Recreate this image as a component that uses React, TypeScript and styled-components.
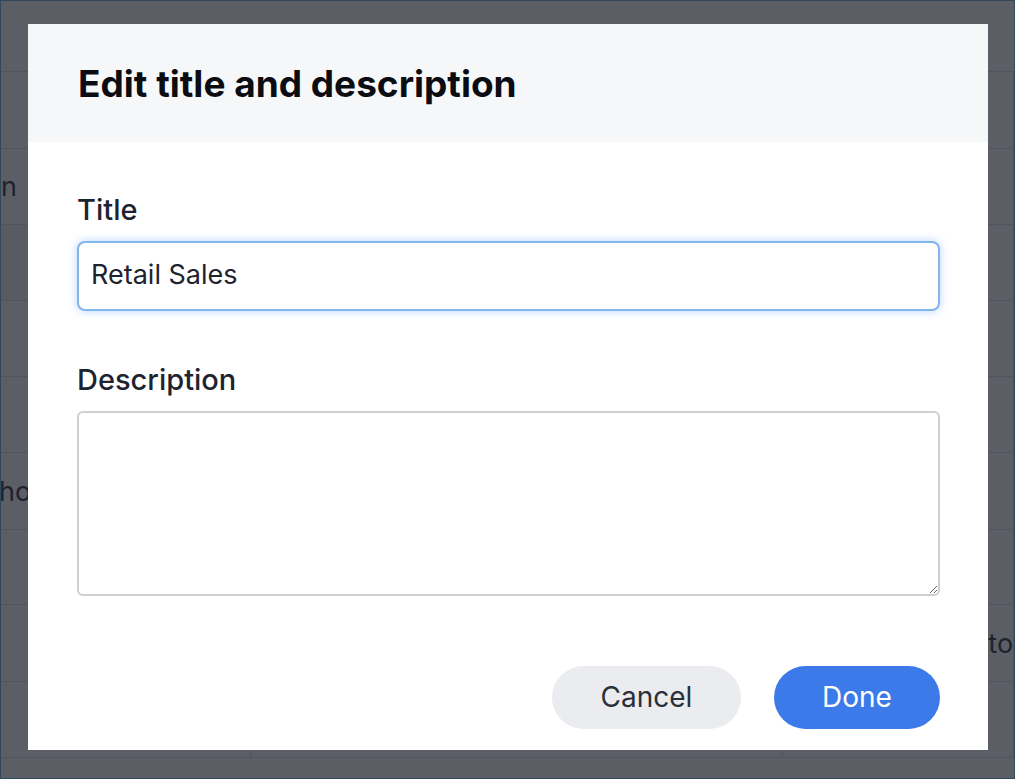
import React from "react";
import styled, { createGlobalStyle } from "styled-components";

const GlobalStyle = createGlobalStyle`
  html, body { margin: 0; padding: 0; }
  body { font-family: Inter, "Noto Sans", sans-serif; background: #ffffff; }
  *, *::before, *::after { box-sizing: border-box; }
`;

const Page = styled.div`
  position: relative;
  width: 100vw;
  height: 100vh;
  overflow: hidden;
  border: 1px solid #2e4a59;
  background: #ffffff;
`;

const Table = styled.div`
  display: flex;
  flex-direction: column;
`;

const Row = styled.div<{ $h: number; $head?: boolean }>`
  display: grid;
  grid-template-columns: 250px 532px 1fr;
  height: ${(p) => p.$h}px;
  border-bottom: 1px solid #d5d8de;
  flex-shrink: 0;
  & > div {
    border-right-color: ${(p) => (p.$head ? "transparent" : "#d5d8de")};
  }
`;

const Cell = styled.div<{ $tint?: boolean }>`
  display: flex;
  align-items: center;
  overflow: hidden;
  white-space: nowrap;
  border-right: 1px solid #d5d8de;
  font-size: 27px;
  color: #1d232f;
  background: ${(p) => (p.$tint ? "#f4f2f0" : "transparent")};
`;

const CellText = styled.span<{ $offset: number }>`
  margin-left: ${(p) => p.$offset}px;
`;

const Overlay = styled.div`
  position: absolute;
  inset: 0;
  background: rgba(30, 34, 44, 0.73);
  display: flex;
  align-items: flex-start;
  justify-content: flex-start;
  padding: 23px 0 0 27px;
`;

const Dialog = styled.div`
  width: 960px;
  height: 726px;
  background: #ffffff;
  display: flex;
  flex-direction: column;
`;

const Header = styled.header`
  height: 118px;
  background: #f6f7f9;
  padding: 0 50px;
  display: flex;
  align-items: center;
`;

const Heading = styled.h2`
  margin: 0;
  font-size: 37px;
  font-weight: 700;
  letter-spacing: 0;
  color: #0b0d12;
`;

const Body = styled.div`
  flex: 1;
  display: flex;
  flex-direction: column;
  gap: 53px;
  padding: 52px 48px 21px 49px;
`;

const Field = styled.div`
  display: flex;
  flex-direction: column;
  gap: 15px;
`;

const Label = styled.label`
  font-size: 29px;
  line-height: 32px;
  font-weight: 500;
  color: #1d232f;
`;

const TextInput = styled.input`
  width: 100%;
  height: 70px;
  border: 2px solid #80b5ee;
  border-radius: 8px;
  padding: 0 12px 4px;
  font-family: Inter, "Noto Sans", sans-serif;
  font-size: 27px;
  color: #1d232f;
  background: #ffffff;
  box-shadow: 0 0 10px rgba(58, 134, 255, 0.35);
  outline: none;
`;

const TextArea = styled.textarea`
  width: 100%;
  height: 185px;
  border: 2px solid #cfcfcf;
  border-radius: 6px;
  padding: 12px;
  font-family: Inter, "Noto Sans", sans-serif;
  font-size: 27px;
  color: #1d232f;
  background: #ffffff;
  outline: none;
  resize: both;
`;

const Footer = styled.div`
  margin-top: auto;
  display: flex;
  justify-content: flex-end;
  gap: 33px;
`;

const Button = styled.button<{ $primary?: boolean; $w: number }>`
  width: ${(p) => p.$w}px;
  height: 63px;
  border: none;
  border-radius: 32px;
  padding: 0 0 2px;
  font-family: Inter, "Noto Sans", sans-serif;
  font-size: 28px;
  font-weight: 400;
  cursor: pointer;
  background: ${(p) => (p.$primary ? "#3b7ae8" : "#ebecf0")};
  color: ${(p) => (p.$primary ? "#ffffff" : "#2b2f38")};
`;

type BgRow = { h: number; head?: boolean; cells: { text?: string; offset?: number; tint?: boolean }[] };

const rows: BgRow[] = [
  { h: 71, head: true, cells: [{}, {}, {}] },
  { h: 77, cells: [{}, {}, {}] },
  { h: 76, cells: [{ text: "Region", offset: -72 }, {}, {}] },
  { h: 76, cells: [{ tint: true }, {}, {}] },
  { h: 76, cells: [{}, {}, {}] },
  { h: 76, cells: [{}, {}, {}] },
  { h: 77, cells: [{ text: "hours", offset: -2 }, {}, {}] },
  { h: 75, cells: [{}, {}, {}] },
  { h: 77, cells: [{}, {}, { text: "Toronto", offset: 132 }] },
  { h: 76, cells: [{}, {}, {}] },
];

export default function App() {
  return (
    <>
      <GlobalStyle />
      <Page>
        <Table>
          {rows.map((r, i) => (
            <Row key={i} $h={r.h} $head={r.head}>
              {r.cells.map((c, j) => (
                <Cell key={j} $tint={c.tint}>
                  {c.text && <CellText $offset={c.offset ?? 0}>{c.text}</CellText>}
                </Cell>
              ))}
            </Row>
          ))}
        </Table>
        <Overlay>
          <Dialog role="dialog">
            <Header>
              <Heading>Edit title and description</Heading>
            </Header>
            <Body>
              <Field>
                <Label htmlFor="title">Title</Label>
                <TextInput id="title" defaultValue="Retail Sales" />
              </Field>
              <Field>
                <Label htmlFor="desc">Description</Label>
                <TextArea id="desc" />
              </Field>
              <Footer>
                <Button $w={189}>Cancel</Button>
                <Button $w={166} $primary>
                  Done
                </Button>
              </Footer>
            </Body>
          </Dialog>
        </Overlay>
      </Page>
    </>
  );
}
